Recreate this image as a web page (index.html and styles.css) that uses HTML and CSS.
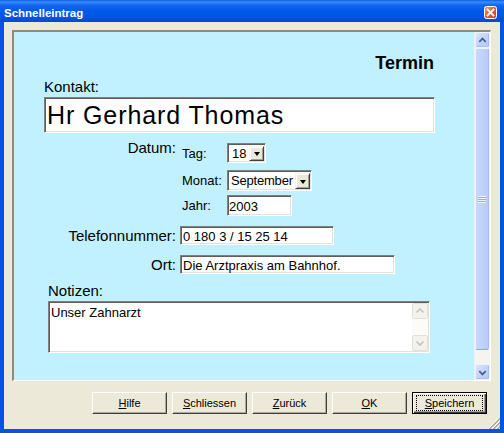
FILE: index.html
```html
<!DOCTYPE html>
<html lang="de">
<head>
<meta charset="utf-8">
<title>Schnelleintrag</title>
<link rel="stylesheet" href="styles.css">
</head>
<body>
<div class="window">
  <div class="titlebar">
    <span class="title">Schnelleintrag</span>
    <span class="close">
      <svg width="13" height="13" viewBox="0 0 13 13">
        <defs>
          <linearGradient id="cg" x1="0" y1="0" x2="1" y2="1">
            <stop offset="0" stop-color="#f0a08a"/>
            <stop offset="0.45" stop-color="#e2603f"/>
            <stop offset="1" stop-color="#c7401c"/>
          </linearGradient>
        </defs>
        <rect x="0.5" y="0.5" width="12" height="12" rx="2" fill="url(#cg)" stroke="#fff"/>
        <path d="M3.5 3.5 L9.5 9.5 M9.5 3.5 L3.5 9.5" stroke="#fff" stroke-width="1.8" stroke-linecap="square"/>
      </svg>
    </span>
  </div>
  <div class="frame">
    <div class="panel">
      <div class="content">
        <div class="heading">Termin</div>
        <div class="label-lg kontakt-label">Kontakt:</div>
        <div class="sunken big-input">Hr Gerhard Thomas</div>
        <div class="form-grid">
          <div class="lbl datum">Datum:</div>
          <div class="date-grid">
            <div class="date-row gap7">
              <span class="sub">Tag:</span>
              <div class="sunken select tag">
                <span class="val">18</span>
                <span class="dd"><span class="tri"></span></span>
              </div>
            </div>
            <div class="date-row gap4">
              <span class="sub">Monat:</span>
              <div class="sunken select monat">
                <span class="val tight">September</span>
                <span class="dd"><span class="tri"></span></span>
              </div>
            </div>
            <div class="date-row">
              <span class="sub">Jahr:</span>
              <div class="sunken field jahr">2003</div>
            </div>
          </div>
          <div class="lbl">Telefonnummer:</div>
          <div class="sunken field tel">0 180 3 / 15 25 14</div>
          <div class="lbl">Ort:</div>
          <div class="sunken field ort">Die Arztpraxis am Bahnhof.</div>
        </div>
        <div class="label-lg notiz-label">Notizen:</div>
        <div class="sunken textarea">
          <div class="ta-text">Unser Zahnarzt</div>
          <div class="ta-scroll">
            <span class="ta-btn">
              <svg width="14" height="14" viewBox="0 0 14 14"><path d="M3.5 8.5 L7 5 L10.5 8.5" fill="none" stroke="#c8c6bb" stroke-width="1.6"/></svg>
            </span>
            <span class="ta-btn">
              <svg width="14" height="14" viewBox="0 0 14 14"><path d="M3.5 5.5 L7 9 L10.5 5.5" fill="none" stroke="#c8c6bb" stroke-width="1.6"/></svg>
            </span>
          </div>
        </div>
      </div>
      <div class="vscroll">
        <span class="sb-btn">
          <svg width="15" height="15" viewBox="0 0 15 15"><path d="M3.8 9 L7.5 5.3 L11.2 9" fill="none" stroke="#4d6185" stroke-width="2"/></svg>
        </span>
        <span class="thumb"><span class="grip"></span></span>
        <span class="track"></span>
        <span class="sb-btn">
          <svg width="15" height="15" viewBox="0 0 15 15"><path d="M3.8 6 L7.5 9.7 L11.2 6" fill="none" stroke="#4d6185" stroke-width="2"/></svg>
        </span>
      </div>
    </div>
    <div class="buttons">
      <span class="btn"><u>H</u>ilfe</span>
      <span class="btn"><u>S</u>chliessen</span>
      <span class="btn"><u>Z</u>urück</span>
      <span class="btn"><u>O</u>K</span>
      <span class="btn default"><span class="focus"><u>S</u>peichern</span></span>
    </div>
    <svg class="sizegrip" width="13" height="12" viewBox="0 0 13 12">
      <path d="M12 1 L1 12 M12 5 L5 12 M12 9 L9 12" stroke="#fff" stroke-width="1"/>
      <path d="M13 1 L2 12 M13 2 L3 12 M13 5 L6 12 M13 6 L7 12 M13 9 L10 12 M13 10 L11 12" stroke="#aca899" stroke-width="1"/>
    </svg>
  </div>
</div>
</body>
</html>
```

FILE: styles.css
```css
* {
  box-sizing: border-box;
}

body {
  margin: 0;
  font-family: "Liberation Sans", Arial, sans-serif;
  color: #000;
}

.window {
  width: 504px;
  height: 433px;
  display: flex;
  flex-direction: column;
}

.titlebar {
  height: 22px;
  flex: none;
  display: flex;
  align-items: flex-start;
  padding: 0 7px 0 4px;
  background: linear-gradient(to bottom, #0a5ee8 0, #3d8ef8 2px, #1467ef 5px, #0058e7 11px, #0056e4 17px, #0049d2 22px);
}

.title {
  color: #fff;
  font-weight: bold;
  font-size: 11.5px;
  line-height: 13px;
  margin-top: 7px;
}

.close {
  margin-left: auto;
  margin-top: 6px;
  width: 13px;
  height: 13px;
  display: flex;
}

.frame {
  flex: 1;
  position: relative;
  display: flex;
  flex-direction: column;
  background: #ece9d8;
  border-style: solid;
  border-color: #0553e0;
  border-width: 0 4px 4px 4px;
  padding: 8px 9px 0 8px;
}

.panel {
  height: 351px;
  flex: none;
  display: flex;
  background: #c1f1fe;
  border-top: 2px solid #8f8c7f;
  border-left: 2px solid #8f8c7f;
  border-right: 1px solid #fff;
  border-bottom: 1px solid #fff;
}

.content {
  flex: 1;
  padding-top: 21px;
}

.heading {
  font-size: 18px;
  font-weight: bold;
  line-height: 20px;
  text-align: right;
  padding-right: 40px;
}

.label-lg {
  font-size: 15px;
  line-height: 17px;
}

.kontakt-label {
  margin: 5px 0 0 30px;
}

.sunken {
  background: #fff;
  border-top: 1px solid #808080;
  border-left: 1px solid #808080;
  border-right: 1px solid #fff;
  border-bottom: 1px solid #fff;
  box-shadow: inset 1px 1px 0 #5f5e58, inset -1px -1px 0 #e4e2d6;
}

.big-input {
  margin: 2px 0 0 30px;
  width: 391px;
  height: 36px;
  font-size: 25px;
  letter-spacing: 0.9px;
  line-height: 31px;
  padding: 2px 0 0 2px;
  white-space: nowrap;
}

.form-grid {
  margin-top: 10px;
  display: grid;
  grid-template-columns: 162px auto;
  column-gap: 4px;
  row-gap: 10px;
  align-items: center;
  justify-items: start;
}

.lbl {
  justify-self: end;
  font-size: 15px;
  line-height: 17px;
}

.lbl.datum {
  align-self: start;
  margin-top: -4px;
}

.date-grid {
  display: flex;
  flex-direction: column;
  padding-left: 2px;
}

.date-row {
  display: flex;
  align-items: center;
}

.gap7 {
  margin-bottom: 7px;
}

.gap4 {
  margin-bottom: 4px;
}

.sub {
  width: 45px;
  font-size: 13px;
  line-height: 15px;
}

.select {
  display: flex;
  padding: 1px 1px 1px 1px;
}

.select.tag {
  width: 39px;
  height: 20px;
}

.select.monat {
  width: 85px;
  height: 21px;
}

.val {
  flex: 1;
  min-width: 0;
  overflow: hidden;
  font-size: 13px;
  line-height: 17px;
  padding-left: 3px;
  white-space: nowrap;
}

.val.tight {
  letter-spacing: -0.2px;
  padding-left: 2px;
}

.dd {
  flex: none;
  width: 15px;
  margin: 1px 0 0 0;
  display: flex;
  align-items: center;
  justify-content: center;
  background: #ece9d8;
  border-top: 1px solid #f4f3ee;
  border-left: 1px solid #f4f3ee;
  border-right: 1px solid #404040;
  border-bottom: 1px solid #404040;
  box-shadow: inset 1px 1px 0 #fff, inset -1px -1px 0 #a0a0a0;
}

.tri {
  width: 0;
  height: 0;
  border-left: 3.5px solid transparent;
  border-right: 3.5px solid transparent;
  border-top: 4px solid #000;
  margin-top: 1px;
}

.field {
  font-size: 13px;
  line-height: 15px;
  padding: 2px 0 0 2px;
  white-space: nowrap;
}

.field.jahr {
  width: 65px;
  height: 21px;
  padding-top: 3px;
  padding-left: 1px;
}

.field.tel {
  width: 154px;
  height: 19px;
}

.field.ort {
  width: 215px;
  height: 19px;
}

.notiz-label {
  margin: 8px 0 0 34px;
}

.textarea {
  margin: 2px 0 0 34px;
  width: 382px;
  height: 52px;
  display: flex;
  padding: 1px 1px 1px 1px;
}

.ta-text {
  flex: 1;
  font-size: 13px;
  line-height: 15px;
  padding: 2px 0 0 1px;
}

.ta-scroll {
  width: 16px;
  display: flex;
  flex-direction: column;
  justify-content: space-between;
  background: #fbfbf8;
}

.ta-btn {
  width: 16px;
  height: 16px;
  display: flex;
  align-items: center;
  justify-content: center;
  background: #f3f2ec;
  border: 1px solid #e3e1d7;
  border-radius: 2px;
}

.vscroll {
  width: 16px;
  flex: none;
  display: flex;
  flex-direction: column;
  background: #f5f4ef;
  border-left: 1px solid #eef0f5;
}

.sb-btn {
  height: 16px;
  flex: none;
  display: flex;
  align-items: center;
  justify-content: center;
  background: linear-gradient(135deg, #dbe5fd 0%, #c3d3fc 50%, #b3c7f8 100%);
  border: 1px solid #eef2fd;
  border-radius: 2px;
  box-shadow: inset -1px -1px 0 #a9bff2;
}

.thumb {
  height: 302px;
  flex: none;
  margin: 0 1px 0 0;
  display: flex;
  align-items: center;
  justify-content: center;
  background: linear-gradient(to right, #c9d7fc 0%, #c2d2fc 50%, #b9caf9 100%);
  border: 1px solid #eef2fd;
  border-bottom-color: #8ca7e8;
  border-right-color: #a8bdf3;
  border-radius: 2px;
}

.grip {
  width: 8px;
  height: 7px;
  background: repeating-linear-gradient(to bottom, #eef4ff 0, #eef4ff 1px, #8cb0f8 1px, #8cb0f8 2px);
}

.track {
  flex: 1;
}

.buttons {
  display: flex;
  justify-content: flex-end;
  gap: 5px;
  margin: 11px 4px 0 0;
}

.btn {
  width: 75px;
  height: 22px;
  display: flex;
  align-items: center;
  justify-content: center;
  font-size: 11px;
  background: #ece9d8;
  border-top: 1px solid #fff;
  border-left: 1px solid #fff;
  border-right: 1px solid #404040;
  border-bottom: 1px solid #404040;
  box-shadow: inset -1px -1px 0 #aca899;
}

.btn.default {
  border: 1px solid #000;
  box-shadow: inset 1px 1px 0 #fff, inset -1px -1px 0 #404040, inset -2px -2px 0 #aca899;
}

.focus {
  width: 65px;
  height: 14px;
  display: flex;
  align-items: center;
  justify-content: center;
  outline: 1px dotted #000;
}

.sizegrip {
  position: absolute;
  right: 0;
  bottom: 0;
}
```
